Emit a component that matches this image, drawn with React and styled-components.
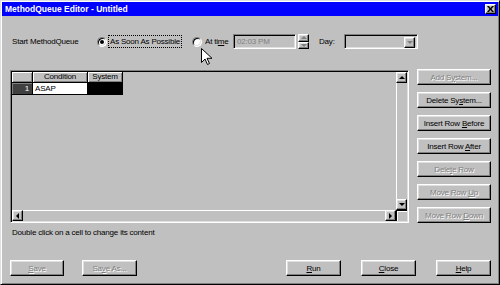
import React from 'react';
import styled, { createGlobalStyle, css } from 'styled-components';

const GlobalStyle = createGlobalStyle`
  html, body {
    margin: 0;
    padding: 0;
    background: #c0c0c0;
  }
  * {
    box-sizing: border-box;
  }
`;

const raised = css`
  border: 1px solid;
  border-color: #fff #000 #000 #fff;
  box-shadow: inset -1px -1px #808080, inset 1px 1px #dfdfdf;
`;

const sunken = css`
  border: 1px solid;
  border-color: #808080 #fff #fff #808080;
  box-shadow: inset 1px 1px #000, inset -1px -1px #dfdfdf;
`;

const disabledText = css`
  color: #808080;
  text-shadow: 1px 1px 0 #fff;
`;

const Mn = ({ children }) => <u>{children}</u>;

const App = () => {
  return (
    <>
      <GlobalStyle />
      <Window>
        <TitleBar>
          <Title>MethodQueue Editor - Untitled</Title>
          <CloseButton>
            <svg width="7" height="6" viewBox="0 0 7 6">
              <path d="M0 0h2l1.5 2 1.5-2h2L4.5 3 7 6H5L3.5 4 2 6H0l2.5-3z" fill="#000" />
            </svg>
          </CloseButton>
        </TitleBar>

        <Body>
          <TopRow>
            <Label $width={85}>Start MethodQueue</Label>
            <Radio $checked />
            <RadioLabel $focused $width={74}>As Soon As Possible</RadioLabel>
            <Radio style={{ marginLeft: 10 }} />
            <RadioLabel $width={29}>At ti<Mn>m</Mn>e</RadioLabel>
            <TimeField>02:03 PM</TimeField>
            <Spinner>
              <SpinButton><Arrow $dir="up" $disabled /></SpinButton>
              <SpinButton><Arrow $dir="down" $disabled /></SpinButton>
            </Spinner>
            <Label $width={25} style={{ marginLeft: 10 }}>Day:</Label>
            <Combo>
              <ComboButton><Arrow $dir="down" $disabled /></ComboButton>
            </Combo>
          </TopRow>

          <Middle>
            <GridFrame>
              <TableArea>
                <Table>
                  <CornerHead />
                  <HeadCell>Condition</HeadCell>
                  <HeadCell>System</HeadCell>
                  <RowHead>1</RowHead>
                  <Cell>ASAP</Cell>
                  <Cell $selected />
                </Table>
              </TableArea>
              <VScroll>
                <ScrollButton><Arrow $dir="up" /></ScrollButton>
                <Track $vertical />
                <ScrollButton><Arrow $dir="down" /></ScrollButton>
              </VScroll>
              <HScroll>
                <ScrollButton><Arrow $dir="left" /></ScrollButton>
                <Track />
                <ScrollButton><Arrow $dir="right" /></ScrollButton>
              </HScroll>
              <ScrollCorner />
            </GridFrame>

            <SideButtons>
              <Button $disabled><span>Add S<Mn>y</Mn>stem...</span></Button>
              <Button><span>Delete Sy<Mn>s</Mn>tem...</span></Button>
              <Button><span>Insert Row <Mn>B</Mn>efore</span></Button>
              <Button><span>Insert Row <Mn>A</Mn>fter</span></Button>
              <Button $disabled><span>Dele<Mn>t</Mn>e Row</span></Button>
              <Button $disabled><span>Move Row <Mn>U</Mn>p</span></Button>
              <Button $disabled><span>Move Row <Mn>D</Mn>own</span></Button>
            </SideButtons>
          </Middle>

          <Hint>Double click on a cell to change its content</Hint>

          <BottomRow>
            <Button $disabled $width={54}><span><Mn>S</Mn>ave</span></Button>
            <Button $disabled $width={55} style={{ marginLeft: 18 }}><span>Sa<Mn>v</Mn>e As...</span></Button>
            <Button $width={55} style={{ marginLeft: 'auto' }}><span><Mn>R</Mn>un</span></Button>
            <Button $width={55} style={{ marginLeft: 20 }}><span><Mn>C</Mn>lose</span></Button>
            <Button $width={55} style={{ marginLeft: 20 }}><span><Mn>H</Mn>elp</span></Button>
          </BottomRow>
        </Body>

        <Cursor width="12" height="18" viewBox="0 0 12 18">
          <path d="M0.5 0.5v14l3.5-3.5 2.5 5.5 2-1-2.5-5.2h5z" fill="#fff" stroke="#000" strokeWidth="1" />
        </Cursor>
      </Window>
    </>
  );
};

export default App;

const Window = styled.div`
  position: relative;
  width: 500px;
  height: 285px;
  background: #c0c0c0;
  border: 1px solid;
  border-color: #dfdfdf #000 #000 #dfdfdf;
  box-shadow: inset 1px 1px #fff, inset -1px -1px #808080;
  padding: 1px;
  display: flex;
  flex-direction: column;
  font-family: 'Liberation Sans', Arial, sans-serif;
  font-size: 8px;
  letter-spacing: -0.2px;
  color: #000;
  overflow: hidden;

  u {
    text-decoration: underline;
    text-underline-offset: 1px;
  }
`;

const TitleBar = styled.div`
  height: 14px;
  background: #0000ff;
  display: flex;
  align-items: center;
  justify-content: space-between;
  padding: 0 2px 0 3px;
`;

const Title = styled.span`
  color: #fff;
  font-weight: bold;
  font-size: 8.5px;
  letter-spacing: 0;
`;

const CloseButton = styled.div`
  ${raised};
  width: 11px;
  height: 10px;
  background: #c0c0c0;
  display: flex;
  align-items: center;
  justify-content: center;
`;

const Body = styled.div`
  flex: 1;
  display: flex;
  flex-direction: column;
  padding: 18px 7px 7px 8px;
`;

const TopRow = styled.div`
  display: flex;
  align-items: center;
  height: 15px;
  padding-left: 2px;
`;

const Label = styled.span`
  width: ${(p) => p.$width}px;
  flex-shrink: 0;
`;

const Radio = styled.span`
  position: relative;
  width: 10px;
  height: 10px;
  flex-shrink: 0;
  border-radius: 50%;
  background: #fff;
  border: 1px solid;
  border-color: #808080 #fff #fff #808080;
  box-shadow: inset 1px 1px #000, inset -1px -1px #dfdfdf;

  &::after {
    content: '';
    display: ${(p) => (p.$checked ? 'block' : 'none')};
    position: absolute;
    left: 2px;
    top: 2px;
    width: 4px;
    height: 4px;
    border-radius: 50%;
    background: #000;
  }
`;

const RadioLabel = styled.span`
  width: ${(p) => p.$width}px;
  flex-shrink: 0;
  margin-left: 1px;
  padding: 1px 1px;
  border: 1px dotted ${(p) => (p.$focused ? '#000' : 'transparent')};
  line-height: 9px;
  white-space: nowrap;
`;

const TimeField = styled.div`
  ${sunken};
  color: #808080;
  margin-left: 1px;
  width: 63px;
  height: 15px;
  padding: 2px 3px;
  line-height: 9px;
`;

const Spinner = styled.div`
  margin-left: 2px;
  width: 11px;
  height: 15px;
  display: flex;
  flex-direction: column;
`;

const SpinButton = styled.div`
  ${raised};
  flex: 1;
  background: #c0c0c0;
  display: flex;
  align-items: center;
  justify-content: center;
`;

const Combo = styled.div`
  ${sunken};
  width: 74px;
  height: 15px;
  padding: 2px;
  display: flex;
  justify-content: flex-end;
`;

const ComboButton = styled.div`
  ${raised};
  width: 11px;
  height: 11px;
  background: #c0c0c0;
  display: flex;
  align-items: center;
  justify-content: center;
`;

const Arrow = styled.span`
  width: 0;
  height: 0;
  border: 3px solid transparent;
  ${(p) => {
    const c = p.$disabled ? '#808080' : '#000';
    switch (p.$dir) {
      case 'up':
        return `border-bottom-color: ${c}; border-width: 0 3px 3px;`;
      case 'down':
        return `border-top-color: ${c}; border-width: 3px 3px 0;`;
      case 'left':
        return `border-right-color: ${c}; border-width: 3px 3px 3px 0;`;
      default:
        return `border-left-color: ${c}; border-width: 3px 0 3px 3px;`;
    }
  }}
`;

const Middle = styled.div`
  display: flex;
  margin-top: 20px;
`;

const GridFrame = styled.div`
  ${sunken};
  margin-top: 1px;
  width: 399px;
  height: 153px;
  padding: 1px;
  display: grid;
  grid-template-columns: 1fr 11px;
  grid-template-rows: 1fr 11px;
  background: #c0c0c0;
`;

const TableArea = styled.div`
  overflow: hidden;
`;

const Table = styled.div`
  display: grid;
  grid-template-columns: 21px 55px 35px;
  grid-template-rows: 11px 12px;
  width: max-content;
`;

const headBevel = css`
  background: #c0c0c0;
  border-right: 1px solid #000;
  border-bottom: 1px solid #000;
  box-shadow: inset 1px 1px #fff, inset -1px -1px #808080;
`;

const CornerHead = styled.div`
  ${headBevel};
`;

const HeadCell = styled.div`
  ${headBevel};
  text-align: center;
  line-height: 10px;
`;

const RowHead = styled.div`
  background: #404040;
  color: #fff;
  border-right: 1px solid #000;
  border-bottom: 1px solid #000;
  box-shadow: inset 1px 1px #808080;
  text-align: right;
  padding-right: 3px;
  line-height: 11px;
`;

const Cell = styled.div`
  background: ${(p) => (p.$selected ? '#000' : '#fff')};
  border-right: 1px solid #000;
  border-bottom: 1px solid #000;
  padding-left: 2px;
  line-height: 11px;
`;

const VScroll = styled.div`
  display: flex;
  flex-direction: column;
`;

const HScroll = styled.div`
  display: flex;
`;

const ScrollButton = styled.div`
  ${raised};
  width: 11px;
  height: 11px;
  flex-shrink: 0;
  background: #c0c0c0;
  display: flex;
  align-items: center;
  justify-content: center;
`;

const Track = styled.div`
  flex: 1;
  background: #c0c0c0;
  ${(p) => (p.$vertical ? 'border-left: 1px solid #fff;' : 'border-top: 1px solid #fff;')}
`;

const ScrollCorner = styled.div`
  background: #c0c0c0;
  border-left: 1px solid #000;
  border-top: 1px solid #000;
  box-shadow: inset 1px 1px #fff;
`;

const SideButtons = styled.div`
  margin-left: 8px;
  display: flex;
  flex-direction: column;
  gap: 7px;
  width: 74px;
`;

const Button = styled.div`
  ${raised};
  width: ${(p) => (p.$width ? `${p.$width}px` : '100%')};
  height: 16px;
  flex-shrink: 0;
  background: #c0c0c0;
  display: flex;
  align-items: center;
  justify-content: center;
  white-space: nowrap;
  ${(p) => p.$disabled && disabledText};
`;

const Hint = styled.div`
  margin-top: 5px;
  margin-left: 2px;
  line-height: 10px;
`;

const BottomRow = styled.div`
  margin-top: auto;
  display: flex;
`;

const Cursor = styled.svg`
  position: absolute;
  left: 200px;
  top: 47px;
`;
